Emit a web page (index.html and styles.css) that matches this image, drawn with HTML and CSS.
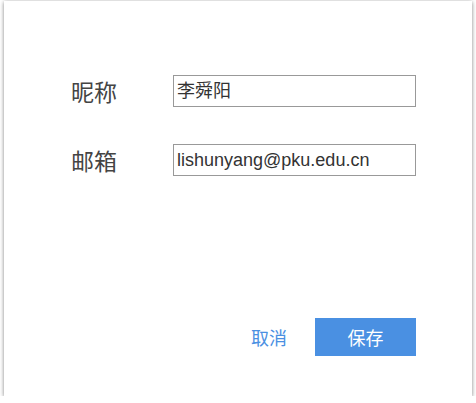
FILE: index.html
```html
<!DOCTYPE html>
<html lang="zh">
<head>
<meta charset="utf-8">
<link rel="stylesheet" href="styles.css">
</head>
<body>
<div class="page">
  <div class="card">
    <div class="form">
      <div class="row">
        <label class="label">昵称</label>
        <div class="input">李舜阳</div>
      </div>
      <div class="row">
        <label class="label">邮箱</label>
        <div class="input">lishunyang@pku.edu.cn</div>
      </div>
    </div>
    <div class="actions">
      <span class="cancel">取消</span>
      <span class="save">保存</span>
    </div>
  </div>
</div>
</body>
</html>
```

FILE: styles.css
```css
html, body {
  margin: 0;
  padding: 0;
  background: #ffffff;
}
body {
  font-family: "Liberation Sans", "Noto Sans CJK SC", sans-serif;
  color: #333;
}
.page {
  padding: 1px 4px 0 4px;
}
.card {
  box-sizing: border-box;
  height: 395px;
  background: #fff;
  box-shadow: 0 1px 4px rgba(0, 0, 0, 0.5);
  display: flex;
  flex-direction: column;
  padding: 74px 56px 40px 67px;
}
.form {
  display: flex;
  flex-direction: column;
  gap: 37px;
}
.row {
  display: flex;
  align-items: center;
}
.label {
  width: 102px;
  font-family: "Noto Sans CJK SC", sans-serif;
  font-size: 23px;
  color: #444;
  line-height: 32px;
}
.input {
  box-sizing: border-box;
  width: 243px;
  height: 32px;
  border: 1px solid #999;
  padding: 0 3px;
  font-size: 18px;
  line-height: 30px;
  color: #333;
}
.actions {
  margin-top: auto;
  display: flex;
  justify-content: flex-end;
  align-items: center;
  gap: 28px;
}
.cancel {
  font-family: "Noto Sans CJK SC", sans-serif;
  font-size: 18px;
  color: #4a90e2;
}
.save {
  box-sizing: border-box;
  width: 101px;
  height: 38px;
  background: #4a90e2;
  color: #fff;
  font-family: "Noto Sans CJK SC", sans-serif;
  font-size: 18px;
  display: flex;
  align-items: center;
  justify-content: center;
}
```
